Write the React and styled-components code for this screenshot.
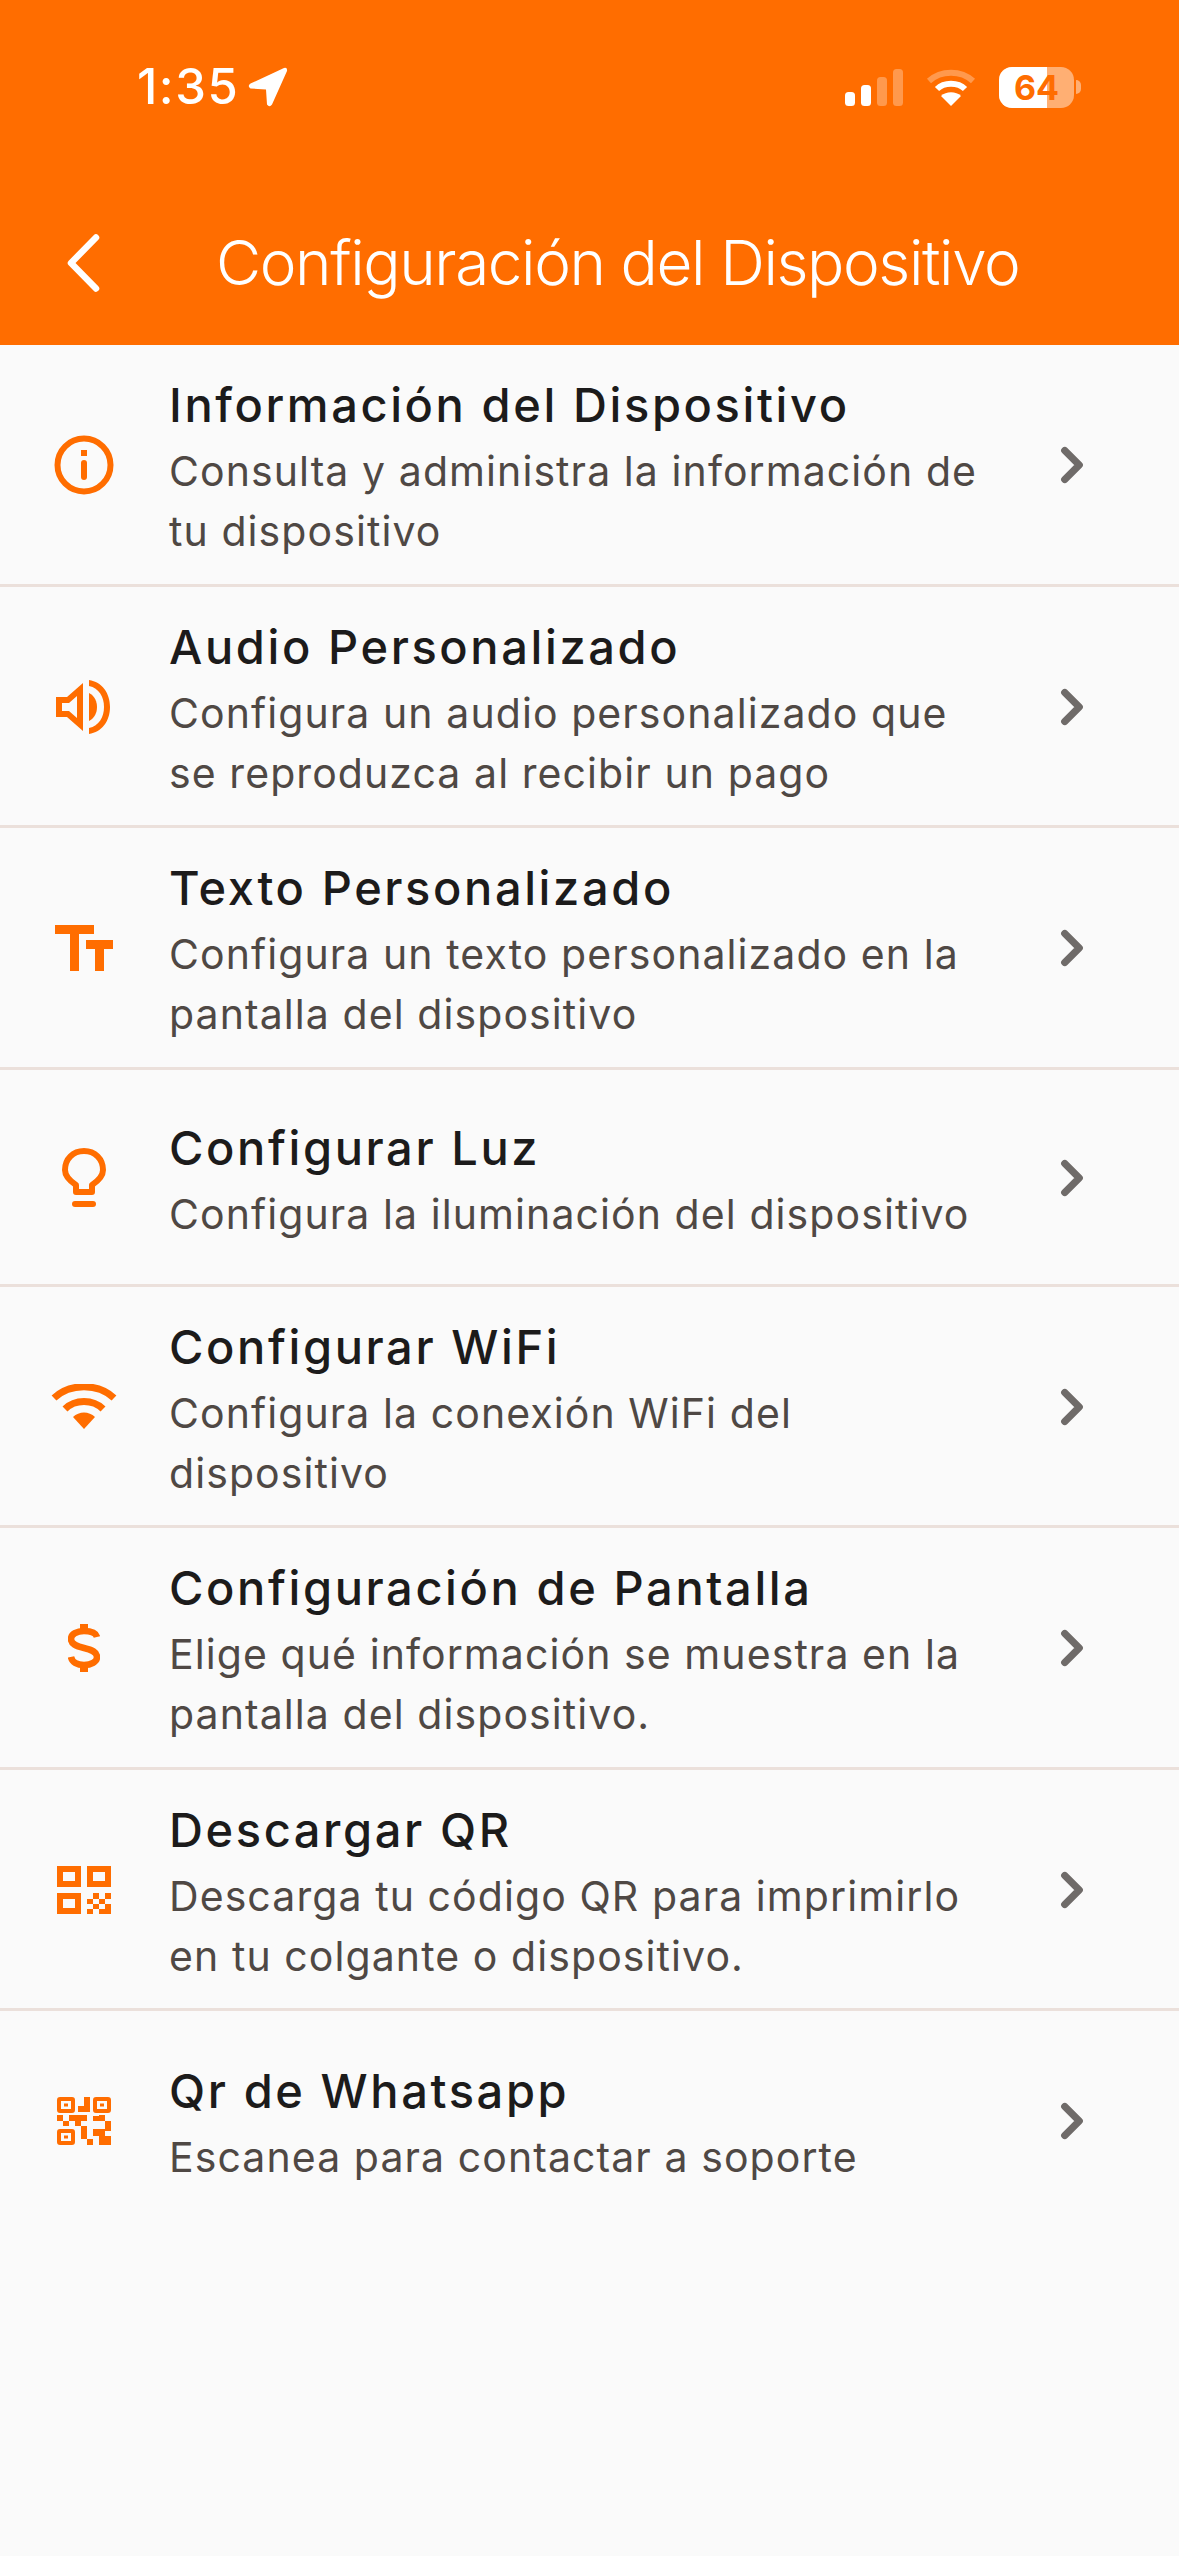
import React from 'react';
import styled, { createGlobalStyle } from 'styled-components';
import { ChevronRight } from 'lucide-react';

const ORANGE = '#ff6d00';

const GlobalStyle = createGlobalStyle`
  html, body {
    margin: 0;
    padding: 0;
    background: #fafafa;
  }
  * {
    box-sizing: border-box;
  }
`;

const Screen = styled.div`
  width: 1179px;
  height: 2556px;
  background: #fafafa;
  font-family: Inter, "Noto Sans", sans-serif;
  overflow: hidden;
`;

const Header = styled.header`
  height: 345px;
  background: ${ORANGE};
  display: flex;
  flex-direction: column;
  color: #fff;
`;

const StatusBar = styled.div`
  height: 138px;
  padding: 36px 98px 0 137px;
  display: flex;
  align-items: center;
  justify-content: space-between;
`;

const TimeGroup = styled.div`
  display: flex;
  align-items: center;
  gap: 9px;
`;

const Time = styled.span`
  font-size: 49px;
  font-weight: 500;
  line-height: 56px;
  letter-spacing: 1.5px;
`;

const StatusIcons = styled.div`
  display: flex;
  align-items: center;
  gap: 23px;
`;

const Battery = styled.div`
  position: relative;
  width: 75px;
  height: 41px;
  border-radius: 13px;
  overflow: hidden;
  background: rgba(255, 255, 255, 0.45);
  display: flex;
  align-items: center;
  justify-content: center;
  font-size: 34px;
  font-weight: 700;
  color: ${ORANGE};
`;

const BatteryFill = styled.div`
  position: absolute;
  left: 0;
  top: 0;
  bottom: 0;
  background: #fff;
`;

const BatteryLabel = styled.span`
  position: relative;
`;

const BatteryWrap = styled.div`
  display: flex;
  align-items: center;
  gap: 2px;
`;

const BatteryCap = styled.div`
  width: 5px;
  height: 14px;
  border-radius: 0 7px 7px 0;
  background: rgba(255, 255, 255, 0.45);
`;

const NavBar = styled.div`
  flex: 1;
  display: flex;
  align-items: center;
  padding: 42px 0 0 64px;
`;

const BackButton = styled.button`
  width: 38px;
  height: 58px;
  padding: 0;
  border: 0;
  background: none;
  display: flex;
`;

const Title = styled.h1`
  margin: 0 0 0 114px;
  font-size: 62px;
  font-weight: 300;
  line-height: 70px;
  letter-spacing: -1.4px;
  white-space: nowrap;
`;

const List = styled.div`
  display: flex;
  flex-direction: column;
`;

const Row = styled.div`
  min-height: ${(p) => (p.$single ? 217 : 241.5)}px;
  display: flex;
  align-items: center;
  padding: 0 78px 0 0;
  border-bottom: ${(p) => (p.$last ? 0 : '3px solid #ebe0db')};
`;

const IconSlot = styled.div`
  width: 169px;
  flex: none;
  display: flex;
  justify-content: center;
  padding: 2px 2px 0 0;
  color: ${ORANGE};
`;

const RowText = styled.div`
  flex: 1;
  padding-top: 8px;
`;

const RowTitle = styled.div`
  font-size: 47px;
  font-weight: 550;
  line-height: 60px;
  letter-spacing: 2.6px;
  color: #1c1b1b;
`;

const RowDesc = styled.div`
  margin-top: 6px;
  max-width: 825px;
  font-size: 41px;
  font-weight: 400;
  line-height: 60px;
  letter-spacing: 1.08px;
  color: #4f4844;
`;

const Chevron = styled(ChevronRight)`
  flex: none;
  margin-top: 2px;
  color: #6f6b69;
`;

const LocationIcon = () => (
  <svg width="40" height="40" viewBox="0 0 40 40" fill="#fff">
    <path d="M36 1 L2.5 16.5 Q-1 19 2.5 21.5 L18 22.5 L19 37.5 Q21.5 41 24 37.5 L39 4 Q39.5 0 36 1 Z" />
  </svg>
);

const SignalIcon = () => (
  <svg width="58" height="37" viewBox="0 0 58 37" fill="#fff">
    <rect x="0" y="23" width="10" height="14" rx="3.5" />
    <rect x="16" y="16" width="10" height="21" rx="3.5" />
    <rect x="32" y="8" width="10" height="29" rx="3.5" opacity="0.3" />
    <rect x="48" y="0" width="10" height="37" rx="3.5" opacity="0.3" />
  </svg>
);

const WifiIcon = () => (
  <svg width="50" height="37" viewBox="0 0 50 37" fill="none" stroke="#fff" strokeWidth="6">
    <path d="M3 12 C15 1 35 1 47 12" opacity="0.3" />
    <path d="M11 20 C18 13 32 13 39 20" />
    <path d="M25 37 L15 27 C20 22 30 22 35 27 Z" fill="#fff" stroke="none" />
  </svg>
);

const InfoIcon = () => (
  <svg width="60" height="60" viewBox="0 0 60 60" fill="none">
    <circle cx="30" cy="30" r="26.5" stroke={ORANGE} strokeWidth="6" />
    <rect x="27" y="15" width="6" height="6" fill={ORANGE} />
    <rect x="27" y="25" width="6" height="20" rx="3" fill={ORANGE} />
  </svg>
);

const SpeakerIcon = () => (
  <svg width="56" height="54" viewBox="0 0 56 54" fill={ORANGE}>
    <path fillRule="evenodd" d="M0 17 H11 L27 3 V51 L11 37 H0 Z M6 23 V31 H13 L21 38 V16 L13 23 Z" />
    <path d="M33 13 C39 16 41 22 41 27 C41 32 39 38 33 41 Z" />
    <path d="M33 0 C46 2 54 13 54 27 C54 41 46 52 33 54 V48 C43 46 48 37 48 27 C48 17 43 8 33 6 Z" />
  </svg>
);

const TextSizeIcon = () => (
  <svg width="58" height="46" viewBox="0 0 58 46" fill={ORANGE}>
    <path d="M0 0 H39 V9 H24 V46 H15 V9 H0 Z" />
    <path d="M31 15 H58 V24 H49 V46 H40 V24 H31 Z" />
  </svg>
);

const BulbIcon = () => (
  <svg width="44" height="60" viewBox="0 0 44 60" fill="none" stroke={ORANGE} strokeWidth="6">
    <path d="M14 44 V37 C8 33 3 28 3 22 C3 11 11 3 22 3 C33 3 41 11 41 22 C41 28 36 33 30 37 V44 Z" strokeLinejoin="round" />
    <path d="M13 56 H31" strokeLinecap="round" />
  </svg>
);

const WifiFullIcon = () => (
  <svg width="66" height="46" viewBox="0 0 66 46" fill="none" stroke={ORANGE} strokeWidth="7">
    <path d="M3 14 C19 -1 47 -1 63 14" />
    <path d="M14 25 C24 15 42 15 52 25" />
    <path d="M33 45 L22 33 C28 27 38 27 44 33 Z" fill={ORANGE} stroke="none" />
  </svg>
);

const DollarIcon = () => (
  <svg width="32" height="48" viewBox="0 0 32 48" fill="none" stroke={ORANGE} strokeWidth="6.5">
    <path d="M29 13 C28 9 23 7 16 7 C9 7 3 10 3 15 C3 20 8 22 16 24 C24 26 29 28 29 33 C29 38 23 41 16 41 C9 41 4 38 3 33" />
    <rect x="12" y="0" width="8" height="8" fill={ORANGE} stroke="none" />
    <rect x="12" y="40" width="8" height="8" fill={ORANGE} stroke="none" />
  </svg>
);

const QrIcon = () => (
  <svg width="54" height="48" viewBox="0 0 54 48" fill={ORANGE}>
    <path fillRule="evenodd" d="M0 0 H24 V21 H0 Z M6 6 V15 H18 V6 Z" />
    <path fillRule="evenodd" d="M30 0 H54 V21 H30 Z M36 6 V15 H48 V6 Z" />
    <path fillRule="evenodd" d="M0 27 H24 V48 H0 Z M6 33 V42 H18 V33 Z" />
    <path d="M36 27 H42 V33 H36 Z M48 27 H54 V33 H48 Z M30 33 H36 V38 H30 Z M42 33 H48 V38 H42 Z M36 38 H42 V43 H36 Z M48 38 H54 V43 H48 Z M30 43 H36 V48 H30 Z M42 43 H54 V48 H42 Z" />
  </svg>
);

const QrCodeIcon = () => (
  <svg width="54" height="48" viewBox="0 0 54 48" fill={ORANGE}>
    <path fillRule="evenodd" d="M3 0 H15 Q18 0 18 3 V13 Q18 16 15 16 H3 Q0 16 0 13 V3 Q0 0 3 0 Z M4 4 V12 H14 V4 Z M7 6.5 H11 V9.5 H7 Z" />
    <path fillRule="evenodd" d="M39 0 H51 Q54 0 54 3 V13 Q54 16 51 16 H39 Q36 16 36 13 V3 Q36 0 39 0 Z M40 4 V12 H50 V4 Z M43 6.5 H47 V9.5 H43 Z" />
    <path fillRule="evenodd" d="M3 32 H15 Q18 32 18 35 V45 Q18 48 15 48 H3 Q0 48 0 45 V35 Q0 32 3 32 Z M4 36 V44 H14 V36 Z M7 38.5 H11 V41.5 H7 Z" />
    <path d="M27 0 H33 V15 H21 V9 H27 Z" />
    <path d="M0 18 H6 V24 H0 Z M6 24 H12 V29 H6 Z M12 18 H30 V24 H24 V29 H18 V24 H12 Z M30 24 H42 V19 H36 V24 Z" />
    <path d="M42 18 H48 V24 H42 Z M48 24 H54 V34 H48 Z M24 29 H30 V42 H24 Z M36 32 H48 V39 H54 V48 H42 V39 H36 Z M30 42 H36 V48 H30 Z" />
  </svg>
);

const items = [
  { icon: <InfoIcon />, title: 'Información del Dispositivo', desc: 'Consulta y administra la información de tu dispositivo' },
  { icon: <SpeakerIcon />, title: 'Audio Personalizado', desc: 'Configura un audio personalizado que se reproduzca al recibir un pago' },
  { icon: <TextSizeIcon />, title: 'Texto Personalizado', desc: 'Configura un texto personalizado en la pantalla del dispositivo' },
  { icon: <BulbIcon />, title: 'Configurar Luz', desc: 'Configura la iluminación del dispositivo', single: true },
  { icon: <WifiFullIcon />, title: 'Configurar WiFi', desc: 'Configura la conexión WiFi del dispositivo' },
  { icon: <DollarIcon />, title: 'Configuración de Pantalla', desc: 'Elige qué información se muestra en la pantalla del dispositivo.' },
  { icon: <QrIcon />, title: 'Descargar QR', desc: 'Descarga tu código QR para imprimirlo en tu colgante o dispositivo.' },
  { icon: <QrCodeIcon />, title: 'Qr de Whatsapp', desc: 'Escanea para contactar a soporte', single: true, last: true },
];

export default function App() {
  return (
    <Screen>
      <GlobalStyle />
      <Header>
        <StatusBar>
          <TimeGroup>
            <Time>1:35</Time>
            <LocationIcon />
          </TimeGroup>
          <StatusIcons>
            <SignalIcon />
            <WifiIcon />
            <BatteryWrap>
              <Battery>
                <BatteryFill style={{ width: '64%' }} />
                <BatteryLabel>64</BatteryLabel>
              </Battery>
              <BatteryCap />
            </BatteryWrap>
          </StatusIcons>
        </StatusBar>
        <NavBar>
          <BackButton aria-label="Volver">
            <svg width="38" height="58" viewBox="0 0 38 58" fill="none" stroke="#fff" strokeWidth="6.5" strokeLinecap="round" strokeLinejoin="round">
              <path d="M32 3.5 L7 29 L32 54.5" />
            </svg>
          </BackButton>
          <Title>Configuración del Dispositivo</Title>
        </NavBar>
      </Header>
      <List>
        {items.map((item) => (
          <Row key={item.title} $single={item.single} $last={item.last}>
            <IconSlot>{item.icon}</IconSlot>
            <RowText>
              <RowTitle>{item.title}</RowTitle>
              <RowDesc>{item.desc}</RowDesc>
            </RowText>
            <Chevron size={58} strokeWidth={3} />
          </Row>
        ))}
      </List>
    </Screen>
  );
}
